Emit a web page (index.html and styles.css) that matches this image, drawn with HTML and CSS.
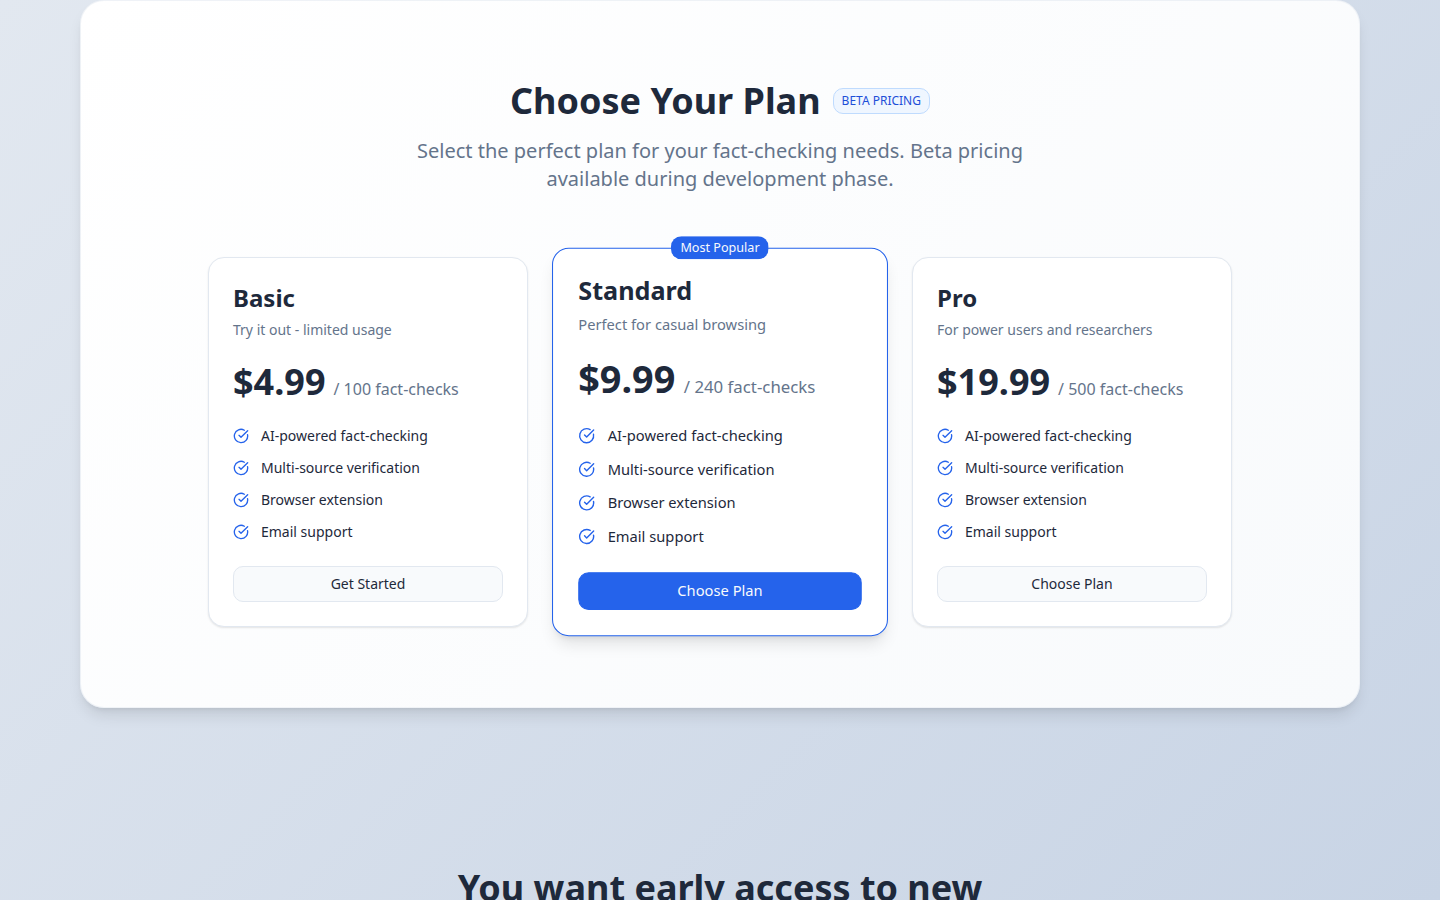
FILE: index.html
```html
<!DOCTYPE html>
<html lang="en">
<head>
    <meta charset="UTF-8">
    <meta name="viewport" content="width=device-width, initial-scale=1.0">
    <title>Choose Your Plan</title>
    <link rel="stylesheet" href="styles.css">
</head>
<body>
    <!-- Shared check icon -->
    <svg class="sprite" width="0" height="0" aria-hidden="true">
        <symbol id="check" viewBox="0 0 24 24">
            <path d="M21.801 10A10 10 0 1 1 17 3.335"/>
            <path d="m9 11 3 3L22 4"/>
        </symbol>
    </svg>

    <main class="page">
        <section class="pricing">
            <div class="pricing-header">
                <div class="title-row">
                    <h2 class="heading">Choose Your Plan</h2>
                    <span class="badge badge-beta">BETA PRICING</span>
                </div>
                <p class="subtitle">Select the perfect plan for your fact-checking needs. Beta pricing available during development phase.</p>
            </div>

            <div class="plans">
                <article class="plan">
                    <h3 class="plan-name">Basic</h3>
                    <p class="plan-desc">Try it out - limited usage</p>
                    <p class="price"><span class="amount">$4.99</span><span class="unit">/ 100 fact-checks</span></p>
                    <ul class="features">
                        <li><svg class="icon"><use href="#check"/></svg>AI-powered fact-checking</li>
                        <li><svg class="icon"><use href="#check"/></svg>Multi-source verification</li>
                        <li><svg class="icon"><use href="#check"/></svg>Browser extension</li>
                        <li><svg class="icon"><use href="#check"/></svg>Email support</li>
                    </ul>
                    <button class="btn" type="button">Get Started</button>
                </article>

                <article class="plan plan-popular">
                    <span class="badge badge-popular">Most Popular</span>
                    <h3 class="plan-name">Standard</h3>
                    <p class="plan-desc">Perfect for casual browsing</p>
                    <p class="price"><span class="amount">$9.99</span><span class="unit">/ 240 fact-checks</span></p>
                    <ul class="features">
                        <li><svg class="icon"><use href="#check"/></svg>AI-powered fact-checking</li>
                        <li><svg class="icon"><use href="#check"/></svg>Multi-source verification</li>
                        <li><svg class="icon"><use href="#check"/></svg>Browser extension</li>
                        <li><svg class="icon"><use href="#check"/></svg>Email support</li>
                    </ul>
                    <button class="btn btn-primary" type="button">Choose Plan</button>
                </article>

                <article class="plan">
                    <h3 class="plan-name">Pro</h3>
                    <p class="plan-desc">For power users and researchers</p>
                    <p class="price"><span class="amount">$19.99</span><span class="unit">/ 500 fact-checks</span></p>
                    <ul class="features">
                        <li><svg class="icon"><use href="#check"/></svg>AI-powered fact-checking</li>
                        <li><svg class="icon"><use href="#check"/></svg>Multi-source verification</li>
                        <li><svg class="icon"><use href="#check"/></svg>Browser extension</li>
                        <li><svg class="icon"><use href="#check"/></svg>Email support</li>
                    </ul>
                    <button class="btn" type="button">Choose Plan</button>
                </article>
            </div>
        </section>

        <section class="early-access">
            <h2 class="heading">You want early access to new</h2>
        </section>
    </main>
</body>
</html>
```

FILE: styles.css
```css
* {
    box-sizing: border-box;
    margin: 0;
    padding: 0;
}
body {
    font-family: "Noto Sans", sans-serif;
    font-size: 16px;
    line-height: 24px;
    color: #1e293b;
    background: linear-gradient(135deg, #e2e8f0, #c8d4e5) fixed;
}
.sprite {
    position: absolute;
}
.page {
    max-width: 1280px;
    margin: 0 auto;
}
.heading {
    font-size: 36px;
    line-height: 40px;
    font-weight: 700;
}

/* Pricing panel */
.pricing {
    padding: 80px 24px;
    border: 1px solid rgba(226, 232, 240, 0.5);
    border-radius: 24px;
    background: linear-gradient(135deg, #ffffff, #f8fafc);
    box-shadow: 0 10px 15px -3px rgba(0, 0, 0, 0.1), 0 4px 6px -4px rgba(0, 0, 0, 0.1);
}
.pricing-header {
    margin-bottom: 64px;
    text-align: center;
}
.title-row {
    display: flex;
    align-items: center;
    justify-content: center;
    gap: 12px;
    margin-bottom: 16px;
}
.subtitle {
    max-width: 672px;
    margin: 0 auto;
    font-size: 20px;
    line-height: 28px;
    color: #64748b;
}
.badge {
    border: 1px solid transparent;
    border-radius: 10px;
    font-size: 12px;
    line-height: 16px;
    white-space: nowrap;
}
.badge-beta {
    padding: 4px 8px;
    border-color: #bfdbfe;
    background: #eff6ff;
    color: #1d4ed8;
}

/* Plan cards */
.plans {
    display: grid;
    grid-template-columns: repeat(3, 1fr);
    gap: 32px;
    max-width: 1024px;
    margin: 0 auto;
}
.plan {
    position: relative;
    padding: 24px;
    border: 1px solid #e2e8f0;
    border-radius: 16px;
    background: #ffffff;
    box-shadow: 0 1px 2px rgba(0, 0, 0, 0.1);
}
.plan-popular {
    border-color: #2563eb;
    box-shadow: 0 10px 15px -3px rgba(0, 0, 0, 0.1), 0 4px 6px -4px rgba(0, 0, 0, 0.1);
    transform: scale(1.05);
}
.badge-popular {
    position: absolute;
    top: -12px;
    left: 50%;
    padding: 2px 8px;
    background: #2563eb;
    color: #f8fafc;
    transform: translateX(-50%);
}
.plan-name {
    margin-bottom: 6px;
    font-size: 24px;
    line-height: 32px;
    font-weight: 700;
}
.plan-desc {
    margin-bottom: 22px;
    font-size: 14px;
    line-height: 20px;
    color: #64748b;
}
.price {
    display: flex;
    align-items: baseline;
    gap: 8px;
    margin-bottom: 24px;
}
.amount {
    font-size: 36px;
    line-height: 40px;
    font-weight: 700;
}
.unit {
    color: #64748b;
}
.features {
    display: grid;
    gap: 12px;
    margin-bottom: 24px;
    list-style: none;
    font-size: 14px;
    line-height: 20px;
}
.features li {
    display: flex;
    align-items: center;
    gap: 12px;
}
.icon {
    width: 16px;
    height: 16px;
    fill: none;
    stroke: #2563eb;
    stroke-width: 2;
    stroke-linecap: round;
    stroke-linejoin: round;
}
.btn {
    width: 100%;
    padding: 7px 16px;
    border: 1px solid #e2e8f0;
    border-radius: 10px;
    background: #f8fafc;
    color: #1e293b;
    font-family: inherit;
    font-size: 14px;
    line-height: 20px;
    cursor: pointer;
}
.btn-primary {
    border-color: #2563eb;
    background: #2563eb;
    color: #f8fafc;
}

/* Early access */
.early-access {
    padding: 160px 24px 80px;
    text-align: center;
}
```
